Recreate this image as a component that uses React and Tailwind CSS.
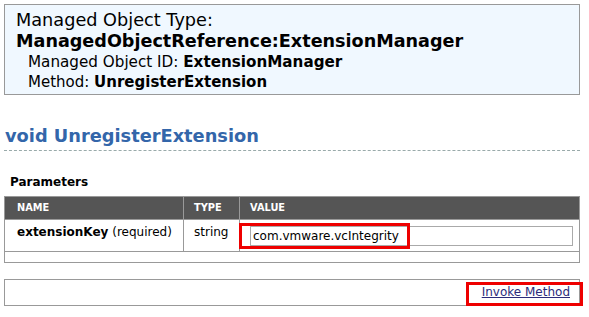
import React from 'react';

const font = { fontFamily: '"DejaVu Sans", Verdana, sans-serif' };

export default function App() {
  return (
    <div className="bg-white text-black pt-[4px] pl-[4px] pr-[9px] w-[589px] h-[317px]" style={font}>
      {/* Object header */}
      <div className="border border-[#999999] bg-[#f0f8ff] h-[91px] pl-[11px] pt-[5px]">
        <div className="text-[17.7px] leading-[21px]">Managed Object Type:</div>
        <div className="text-[17.6px] leading-[21px] font-bold">ManagedObjectReference:ExtensionManager</div>
        <div className="pl-[12px] text-[15.2px] leading-[21px]">
          Managed Object ID: <span className="font-bold">ExtensionManager</span>
        </div>
        <div className="pl-[12px] text-[15px] leading-[18px]">
          Method: <span className="font-bold">UnregisterExtension</span>
        </div>
      </div>

      {/* Method title */}
      <h2 className="mt-[30px] text-[17.8px] leading-[22px] font-bold text-[#3366aa] pl-[1px] pb-[3px] border-b border-dashed border-[#99aaaa]">
        void UnregisterExtension
      </h2>

      {/* Parameters */}
      <div className="mt-[24px] pl-[6px] text-[12px] leading-[15px] font-bold">Parameters</div>
      <table className="mt-[6px] w-full table-fixed border-collapse border border-[#999999] text-[12px]">
        <thead>
          <tr className="bg-[#555555] text-white text-[9.8px] font-bold h-[23px]">
            <th className="w-[179px] text-left pl-[12px] border border-[#999999]">NAME</th>
            <th className="w-[56px] text-left pl-[10px] border border-[#999999]">TYPE</th>
            <th className="text-left pl-[10px] border border-[#999999]">VALUE</th>
          </tr>
        </thead>
        <tbody>
          <tr className="h-[32px]">
            <td className="pl-[12px] border border-[#999999] align-top pt-[4px] leading-[16px] whitespace-nowrap">
              <span className="font-bold">extensionKey</span> (required)
            </td>
            <td className="pl-[10px] border border-[#999999] align-top pt-[4px] leading-[16px]">string</td>
            <td className="pl-[10px] pr-[6px] border border-[#999999]">
              <div className="relative">
                <div className="h-[20px] border border-[#aaaaaa] pl-[2px] text-[12px] leading-[18px]">
                  com.vmware.vcIntegrity
                </div>
                <div className="absolute left-[-11px] top-[-3px] w-[171px] h-[26px] border-[3px] border-[#ee0000]"></div>
              </div>
            </td>
          </tr>
          <tr className="h-[11px]">
            <td colSpan={3} className="border border-[#999999]"></td>
          </tr>
        </tbody>
      </table>

      {/* Invoke */}
      <div className="mt-[16px] border border-[#999999] h-[27px] flex justify-end items-center pr-[9px]">
        <div className="relative">
          <a href="#" className="block text-[12px] leading-[15px] text-[#2b2b7b] underline">Invoke Method</a>
          <div className="absolute left-[-16px] top-[-3px] right-[-13px] h-[24px] border-[3px] border-[#ee0000]"></div>
        </div>
      </div>
    </div>
  );
}
